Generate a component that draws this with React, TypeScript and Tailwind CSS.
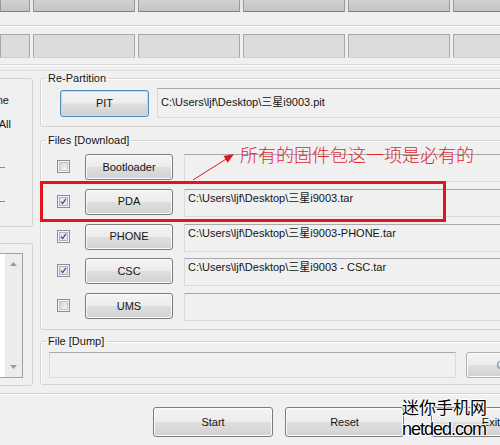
import React from "react";

const files = [
  { name: "Bootloader", checked: false, path: "" },
  { name: "PDA", checked: true, path: "C:\\Users\\ljf\\Desktop\\三星i9003.tar" },
  { name: "PHONE", checked: true, path: "C:\\Users\\ljf\\Desktop\\三星i9003-PHONE.tar" },
  { name: "CSC", checked: true, path: "C:\\Users\\ljf\\Desktop\\三星i9003 - CSC.tar" },
  { name: "UMS", checked: false, path: "" },
];

const tabWidths = ["w-[30px]", "w-[102px]", "w-[102px]", "w-[102px]", "w-[102px]", "w-[60px]"];

function WinButton({
  children,
  className = "",
  focused = false,
}: {
  children?: React.ReactNode;
  className?: string;
  focused?: boolean;
}) {
  return (
    <div
      className={`flex shrink-0 items-center justify-center rounded-[3px] border bg-[linear-gradient(to_bottom,#f4f4f4_0%,#ececec_48%,#dedede_52%,#d2d2d2_100%)] ${
        focused
          ? "border-[#4f8fbf] shadow-[inset_0_0_0_1px_#b7def3]"
          : "border-[#7c7c7c] shadow-[inset_0_0_0_1px_#fbfbfb]"
      } ${className}`}
    >
      {children}
    </div>
  );
}

function Field({ children, className = "" }: { children?: React.ReactNode; className?: string }) {
  return (
    <div
      className={`shrink-0 border border-[#dadada] border-t-[#a9a9a9] bg-[#f0f0f0] pl-[3px] whitespace-nowrap ${className}`}
    >
      {children}
    </div>
  );
}

function Check({ checked }: { checked: boolean }) {
  return (
    <div className="flex h-[13px] w-[13px] shrink-0 items-center justify-center border border-[#8e8f8f] bg-[#f4f4f4]">
      <div
        className={`flex h-[9px] w-[9px] items-center justify-center border ${
          checked
            ? "border-[#aab4c8] bg-[#e2e7f1]"
            : "border-[#c4c4c4] bg-linear-to-br from-[#d4d4d4] to-[#f7f7f7]"
        }`}
      >
        {checked && (
          <svg width="9" height="9" viewBox="0 0 9 9">
            <path d="M1.2 4.6 L3.4 7.2 L7.6 1.2" fill="none" stroke="#3b4d86" strokeWidth="1.6" />
          </svg>
        )}
      </div>
    </div>
  );
}

function Group({
  label,
  className = "",
  children,
}: {
  label: string;
  className?: string;
  children: React.ReactNode;
}) {
  return (
    <fieldset
      className={`rounded-[3px] border border-[#d3d3d3] shadow-[inset_1px_1px_0_#fff] ${className}`}
    >
      <legend className="ml-[5px] px-[2px] leading-[13px]">{label}</legend>
      {children}
    </fieldset>
  );
}

export default function App() {
  return (
    <div className="relative h-[445px] w-[500px] overflow-hidden bg-[#f0f0f0] font-['Liberation_Sans','Noto_Sans_CJK_SC',sans-serif] text-[11px] leading-[13px] text-[#141414]">
      {/* top tab strips */}
      <div className="flex h-[12px] gap-[3px] bg-[#e8e8e8]">
        {tabWidths.map((w, i) => (
          <div
            key={i}
            className={`${w} shrink-0 border-x border-b border-[#9a9a9a] border-b-[#7f7f7f] bg-linear-to-b from-[#d2d2d2] to-[#c4c4c4]`}
          />
        ))}
      </div>
      <div className="h-[14px] border-b border-[#d6d6d6]" />
      <div className="h-px bg-white" />
      <div className="mt-[7px] flex h-[24px] gap-[3px]">
        {tabWidths.map((w, i) => (
          <div
            key={i}
            className={`${w} shrink-0 border border-[#a8a8a8] border-b-[#cfcfcf] bg-[#dcdcdc]`}
          />
        ))}
      </div>
      <div className="mt-[6px] h-px bg-[#d6d6d6]" />
      <div className="h-px bg-white" />
      <div className="mt-[4px] h-px bg-[#e0e0e0]" />

      {/* main area */}
      <div className="flex">
        {/* left column (clipped) */}
        <div className="w-[33px] shrink-0">
          <div className="mt-[7px] -ml-[8px] h-[149px] w-[41px] rounded-[3px] border border-[#d3d3d3]">
            <div className="mt-[15px] w-[16px] text-right">ne</div>
            <div className="mt-[11px] w-[18px] text-right">All</div>
            <div className="mt-[36px] h-px w-[12px] bg-[#8a8a8a]" />
            <div className="mt-[33px] h-px w-[12px] bg-[#8a8a8a]" />
          </div>
          <div className="mt-[16px] -ml-[8px] h-[143px] w-[41px] rounded-[3px] border border-[#d3d3d3]">
            <div className="mt-[9px] flex h-[125px] w-[30px] border border-[#9da1a8] bg-white">
              <div className="w-[11px]" />
              <div className="flex w-[17px] flex-col items-center justify-between bg-[#ececec] py-[8px]">
                <svg width="7" height="4" viewBox="0 0 7 4">
                  <path d="M0 4 L3.5 0 L7 4 Z" fill="#9a9a9a" />
                </svg>
                <svg width="7" height="4" viewBox="0 0 7 4">
                  <path d="M0 0 L3.5 4 L7 0 Z" fill="#9a9a9a" />
                </svg>
              </div>
            </div>
          </div>
        </div>

        {/* right column */}
        <div className="ml-[7px] w-[470px] shrink-0">
          <Group label="Re-Partition" className="mt-[1px]">
            <div className="flex items-center pt-[3px] pb-[8px] pl-[19px]">
              <WinButton focused className="h-[27px] w-[89px]">
                PIT
              </WinButton>
              <Field className="ml-[8px] h-[30px] w-[360px] pt-[7px]">
                C:\Users\ljf\Desktop\三星i9003.pit
              </Field>
            </div>
          </Group>

          <Group label="Files [Download]" className="mt-[7px]">
            <div className="flex flex-col gap-[6.75px] pt-[7px] pb-[8px] pl-[16px]">
              {files.map((f) => (
                <div key={f.name} className="flex h-[28px] items-start">
                  <div className="mt-[6px]">
                    <Check checked={f.checked} />
                  </div>
                  <WinButton className="ml-[15px] h-[26px] w-[88px]">{f.name}</WinButton>
                  <Field className="ml-[11px] h-[28px] w-[330px] pt-[2px]">{f.path}</Field>
                </div>
              ))}
            </div>
          </Group>

          <Group label="File [Dump]" className="mt-[5px]">
            <div className="flex items-center pt-[4px] pb-[6px] pl-[8px]">
              <Field className="h-[26px] w-[407px]" />
              <WinButton className="ml-[10px] h-[26px] w-[88px] border-[#b0b0b0] text-[#8a8a8a]">
                Open
              </WinButton>
            </div>
          </Group>
        </div>
      </div>

      {/* bottom bar */}
      <div className="mt-[7px] h-px bg-[#d4d4d4]" />
      <div className="h-px bg-white" />
      <div className="mt-[12px] flex pl-[153px]">
        <WinButton className="h-[30px] w-[120px]">Start</WinButton>
        <WinButton className="ml-[12px] h-[30px] w-[119px]">Reset</WinButton>
        <WinButton className="ml-[27px] h-[30px] w-[120px]">Exit</WinButton>
      </div>

      {/* annotation overlay */}
      <div className="absolute top-[181px] left-[40px] h-[41px] w-[406px] border-[3px] border-[#e3141b]" />
      <svg className="pointer-events-none absolute top-0 left-0" width="500" height="445">
        <line x1="193" y1="180" x2="227" y2="158.5" stroke="#e3141b" strokeWidth="1" />
        <polygon points="234,154 223.5,156 227.7,162.8" fill="#e3141b" />
      </svg>
      <div className="absolute top-[144px] left-[240px] font-['Noto_Sans_CJK_SC',sans-serif] text-[18px] leading-[20px] font-light whitespace-nowrap text-[#e3262d]">
        所有的固件包这一项是必有的
      </div>

      {/* watermark */}
      <div className="absolute top-[397px] left-[402px] font-['Noto_Sans_CJK_SC',sans-serif] text-[17px] leading-[20px] whitespace-nowrap text-black [text-shadow:1px_0_0_#fff,-1px_0_0_#fff,0_1px_0_#fff,0_-1px_0_#fff]">
        迷你手机网
      </div>
      <div className="absolute top-[419px] left-[402px] font-['Liberation_Sans',sans-serif] text-[18px] leading-[20px] tracking-[-1px] whitespace-nowrap text-black [text-shadow:1px_0_0_#fff,-1px_0_0_#fff,0_1px_0_#fff,0_-1px_0_#fff]">
        netded.com
      </div>
    </div>
  );
}
